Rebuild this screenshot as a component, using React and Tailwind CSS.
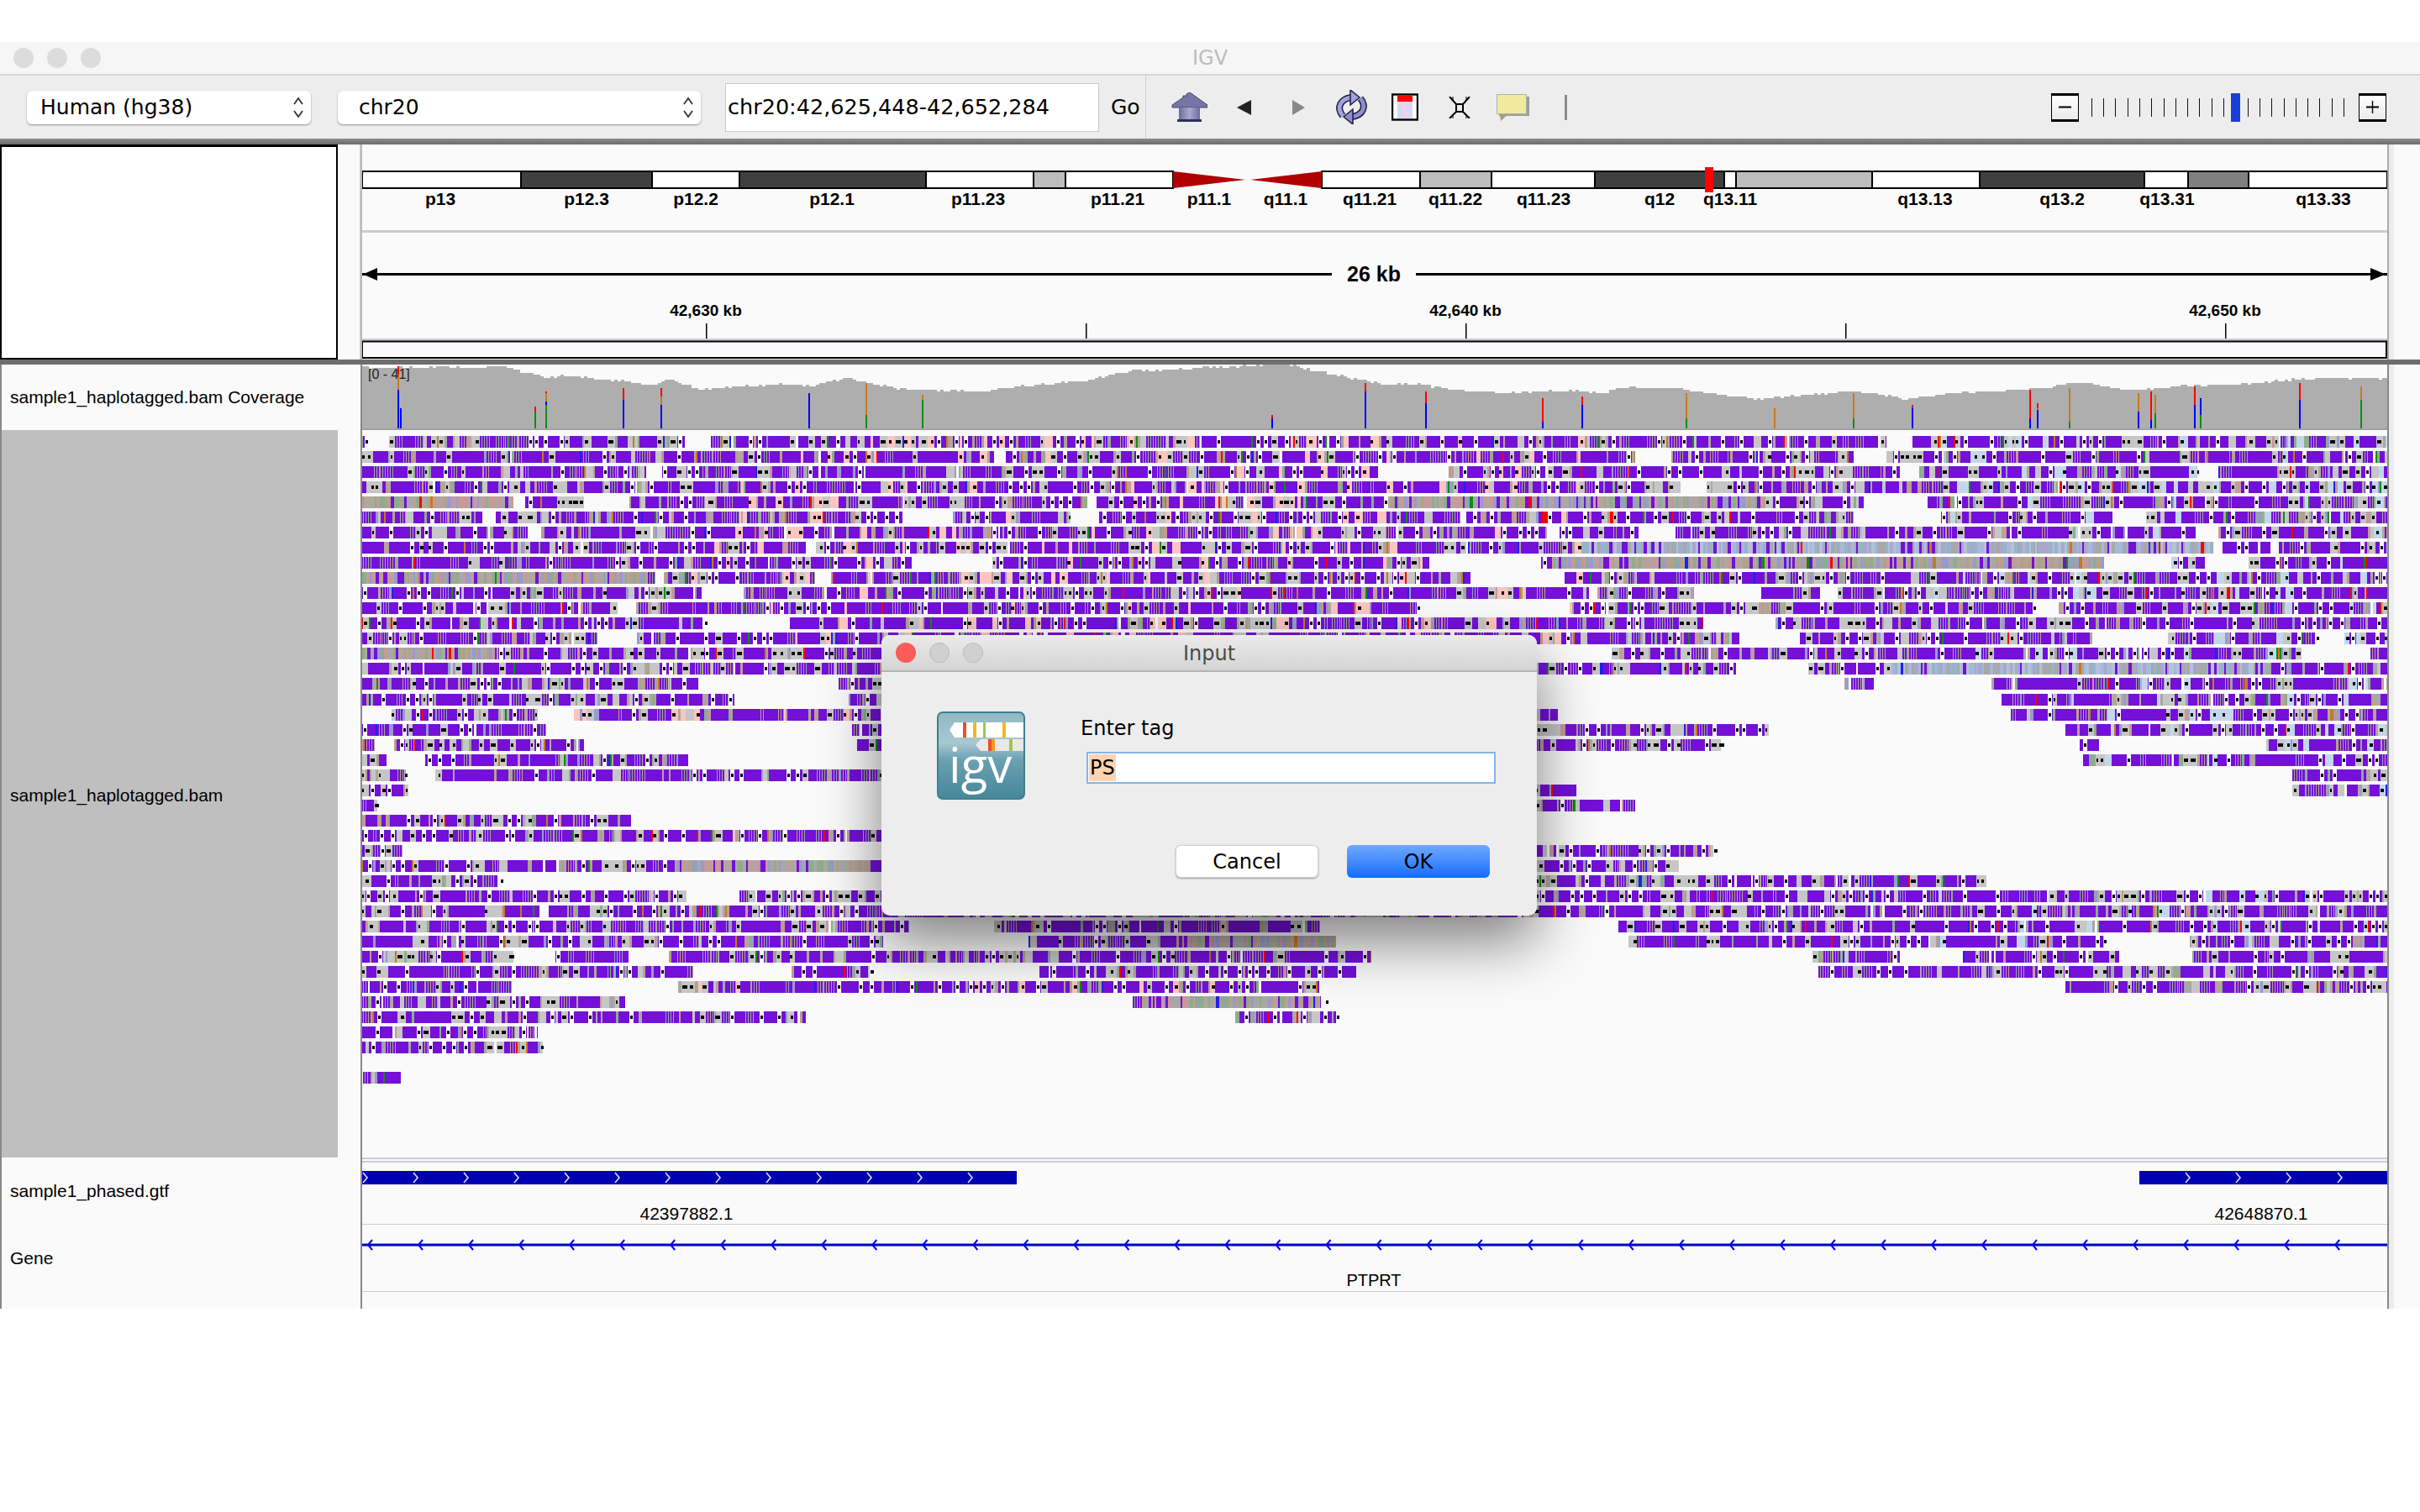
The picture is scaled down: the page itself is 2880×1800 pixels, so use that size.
import { useMemo } from "react";

const SANS = "font-['DejaVu_Sans',sans-serif]";
const ARIAL = "font-['Liberation_Sans',Arial,sans-serif]";

// spans are read off the two halves of the alignment view, 1.285 units per px
const lx = (z) => Math.round(430 + z / 1.285);
const rx = (z) => Math.round(1650 + z / 1.285);

const READ_ROWS = [
  [0, [[0, 8], [42, 495], [535, 1568]], [[0, 765], [805, 1530]]],
  [1, [[0, 968], [985, 1568]], [[0, 380], [435, 715], [765, 1530]]],
  [2, [[0, 435], [460, 1555]], [[95, 785], [815, 1240], [1272, 1530]]],
  [3, [[0, 1568]], [[0, 450], [490, 1530]]],
  [4, [[0, 232], [250, 340], [410, 1110], [1125, 1345], [1355, 1568]], [[0, 730], [828, 1530]]],
  [5, [[0, 185], [205, 828], [905, 1085], [1128, 1568]], [[0, 105], [122, 715], [848, 1110], [1162, 1530]]],
  [6, [[0, 255], [275, 1568]], [[0, 245], [265, 385], [442, 1238], [1272, 1530]]],
  [7, [[0, 680], [695, 1568]], [[0, 1265], [1278, 1352], [1365, 1530]]],
  [8, [[0, 842], [965, 1568]], [[0, 65], [236, 1098], [1200, 1252], [1318, 1530]]],
  [9, [[0, 440], [463, 692], [718, 1568]], [[0, 128], [273, 1530]]],
  [10, [[0, 520], [585, 1568]], [[0, 310], [323, 470], [573, 663], [690, 1530]]],
  [11, [[0, 392], [420, 1568]], [[0, 52], [280, 995], [1028, 1530]]],
  [12, [[0, 522], [655, 1568]], [[0, 485], [595, 1530]]],
  [13, [[0, 360], [422, 1568]], [[0, 540], [632, 1080], [1195, 1420], [1465, 1530]]],
  [14, [[0, 1568]], [[345, 1400], [1505, 1530]]],
  [15, [[0, 1568]], [[0, 535], [645, 1530]]],
  [16, [[0, 515], [730, 1568]], [[700, 745], [925, 1530]]],
  [17, [[0, 570], [745, 1568]], [[940, 1530]]],
  [18, [[42, 270], [325, 1568]], [[0, 262], [955, 1530]]],
  [19, [[0, 272], [750, 1568]], [[0, 585], [1038, 1530]]],
  [20, [[0, 14], [50, 340], [758, 1568]], [[0, 512], [1060, 1090], [1345, 1530]]],
  [21, [[0, 38], [98, 500]], [[1065, 1530]]],
  [22, [[0, 68], [113, 1568]], [[1385, 1530]]],
  [23, [[0, 72]], [[0, 290], [1385, 1530]]],
  [24, [[0, 25]], [[0, 380]]],
  [25, [[0, 412]], []],
  [26, [[0, 1568]], []],
  [27, [[0, 57]], [[0, 500]]],
  [28, [[0, 1568]], [[0, 447]]],
  [29, [[0, 208]], [[0, 917]]],
  [30, [[0, 500], [578, 1568]], [[0, 1530]]],
  [31, [[0, 272], [287, 1568]], [[0, 1530]]],
  [32, [[0, 838], [968, 1458]], [[355, 1530]]],
  [33, [[0, 798], [1020, 1490]], [[370, 1098], [1228, 1530]]],
  [34, [[0, 232], [297, 408], [470, 1545]], [[652, 785], [882, 1120], [1232, 1530]]],
  [35, [[0, 498], [658, 778], [1037, 1522]], [[660, 1530]]],
  [36, [[0, 226], [485, 1465]], [[1038, 1530]]],
  [37, [[0, 403], [1180, 1468]], []],
  [38, [[0, 680], [1337, 1492]], []],
  [39, [[0, 270]], []],
  [40, [[0, 278]], []],
  [42, [[0, 60]], []],
];

const TAN = ["#b4a08c", "#a8a8a8", "#b0a89c", "#8cae8c", "#c89a9a", "#9a9ad0"];
const COOL = ["#a8b8d8", "#b4c0dc", "#a8a8c8", "#98b4c8", "#a8a8a8"];

// stretches where the reads are low quality stripes instead of solid purple
const MUTED = [
  [4, 430, 610, TAN],
  [9, 430, 770, TAN],
  [14, 430, 590, TAN],
  [4, 1650, 2100, TAN],
  [7, 1880, 2640, COOL],
  [8, 1835, 2505, TAN],
  [15, 2250, 2700, COOL],
  [33, 1400, 1640, TAN],
  [37, 1350, 1570, TAN],
  [28, 800, 1040, TAN],
];

const PINK_ROWS = [[18, 680, 1049], [19, 1020, 1049], [36, 830, 1620], [26, 800, 1049]];

const ORDER = ["#7410d8", "#c6c6c6", "#fbc5c0", "#c2d8ea", "#b4a08c", "#a8a8a8", "#b0a89c", "#8cae8c", "#9a9ad0", "#c89a9a", "#a8b8d8", "#b4c0dc", "#a8a8c8", "#98b4c8", "#ff0000", "#108c10", "#2020f0", "#c87a1e", "#fafafa", "#000000"];
const VIVID = ["#ff0000", "#108c10", "#2020f0", "#c87a1e"];

function makeRandom(seed) {
  let a = seed;
  return () => {
    a = (a + 0x6d2b79f5) | 0;
    let t = Math.imul(a ^ (a >>> 15), 1 | a);
    t = (t + Math.imul(t ^ (t >>> 7), 61 | t)) ^ t;
    return ((t ^ (t >>> 14)) >>> 0) / 4294967296;
  };
}

function buildReads() {
  const rnd = makeRandom(20);
  const between = (a, b) => a + Math.floor(rnd() * (b - a + 1));
  const pick = (list) => list[Math.floor(rnd() * list.length)];
  const paths = {};
  ORDER.forEach((c) => (paths[c] = []));
  const add = (c, x, y, w, h) => paths[c].push(`M${x} ${y}h${w}v${h}h${-w}z`);

  READ_ROWS.forEach(([n, left, right]) => {
    const y = Math.round(7 + 18.03 * n);
    const spans = [
      ...left.map(([a, b]) => [lx(a), lx(b)]),
      ...right.map(([a, b]) => [rx(a), rx(b)]),
    ];
    spans.forEach(([a, b]) => {
      let x = a;
      while (x < b) {
        const muted = MUTED.find(([r, s, e]) => r === n && x >= s && x < e);
        const pinkZone = (x > 820 && x < 1880 && n < 14) || PINK_ROWS.some(([r, s, e]) => r === n && x >= s && x < e);
        const blueZone = x > 2300 && n < 34;
        const r = rnd();
        let w;
        if (muted) {
          w = between(2, 4);
          add(r < 0.14 ? "#7410d8" : r < 0.985 ? pick(muted[3]) : pick(VIVID), x, y, Math.min(w, b - x), 14);
        } else if (r < 0.42) {
          w = between(3, 14);
          add("#7410d8", x, y, Math.min(w, b - x), 14);
          if (rnd() < 0.4 && w > 7) {
            const dx = x + between(1, w - 6);
            add("#fafafa", dx, y, 5, 14);
            add("#000000", dx + 1, y + 5, 3, 4);
          }
        } else if (r < 0.54) {
          w = between(3, 10);
          const q = rnd();
          const light = pinkZone && q < 0.75 ? "#fbc5c0" : blueZone && q < 0.6 ? "#c2d8ea" : "#c6c6c6";
          add(light, x, y, Math.min(w, b - x), 14);
          if (rnd() < 0.6 && w > 4) add("#000000", x + between(0, w - 4), y + 5, between(3, 4), 4);
        } else if (r < 0.76) {
          w = between(2, 3);
          add(pick(TAN), x, y, Math.min(w, b - x), 14);
        } else if (r < 0.81) {
          w = 2;
          add(pick(VIVID), x, y, Math.min(w, b - x), 14);
        } else if (r < 0.825) {
          w = between(2, 3);
          add("#fafafa", x, y, Math.min(w, b - x), 14);
        } else if (r < 0.9) {
          w = between(5, 9);
          add("#c6c6c6", x, y, Math.min(w, b - x), 14);
          add("#000000", x + 1, y + 5, Math.max(w - 3, 2), 4);
        } else {
          // thin purple comb on a muted ground, the fine lines seen all over the pile
          w = between(6, 12);
          for (let i = 0; i < w; i += 3) {
            add("#7410d8", x + i, y, 2, 14);
            add(pick(TAN), x + i + 2, y, 1, 14);
          }
        }
        x += w;
      }
    });
  });
  return ORDER.map((c) => ({ color: c, d: paths[c].join("") }));
}

// silhouette of the coverage track, [x, y of the top edge]
const COVERAGE = [
  [431, 438], [600, 437], [630, 445], [648, 450], [676, 447], [735, 453], [776, 458], [793, 451], [830, 463], [925, 457], [965, 460], [1005, 450], [1070, 463], [1160, 466], [1210, 460], [1290, 453], [1340, 442], [1450, 437], [1530, 434], [1590, 447], [1640, 457], [1690, 458], [1722, 463], [1788, 468], [1861, 465], [1902, 468], [1935, 461], [2000, 463], [2090, 475], [2155, 470], [2204, 465], [2269, 475], [2335, 467], [2416, 463], [2482, 455], [2531, 465], [2612, 458], [2661, 458], [2735, 451], [2841, 450],
];

// x, then colour from y down to the next colour
const COVERAGE_BARS = [
  [473, ["#ff0000", 436], ["#c87a1e", 446], ["#0000ff", 464]],
  [476, ["#0000ff", 486]],
  [636, ["#ff0000", 484], ["#108c10", 490]],
  [649, ["#ff0000", 466], ["#c87a1e", 468], ["#0000ff", 478], ["#108c10", 482]],
  [741, ["#ff0000", 462], ["#0000ff", 476]],
  [786, ["#ff0000", 462], ["#c87a1e", 472], ["#0000ff", 482]],
  [962, ["#0000ff", 468]],
  [1030, ["#c87a1e", 456], ["#108c10", 494]],
  [1097, ["#c87a1e", 470], ["#108c10", 476]],
  [1513, ["#ff0000", 494], ["#0000ff", 498]],
  [1624, ["#ff0000", 456], ["#0000ff", 466]],
  [1696, ["#ff0000", 466], ["#0000ff", 480]],
  [1835, ["#ff0000", 474], ["#0000ff", 502]],
  [1882, ["#ff0000", 472], ["#0000ff", 482]],
  [2006, ["#c87a1e", 468], ["#108c10", 498]],
  [2111, ["#c87a1e", 486]],
  [2205, ["#c87a1e", 468], ["#108c10", 498]],
  [2275, ["#ff0000", 482], ["#0000ff", 486]],
  [2415, ["#ff0000", 464], ["#0000ff", 498]],
  [2424, ["#ff0000", 480], ["#c87a1e", 486], ["#0000ff", 488]],
  [2462, ["#c87a1e", 462], ["#108c10", 502]],
  [2544, ["#c87a1e", 468], ["#0000ff", 490]],
  [2559, ["#ff0000", 466], ["#0000ff", 500]],
  [2564, ["#c87a1e", 470], ["#108c10", 492]],
  [2611, ["#ff0000", 460], ["#0000ff", 482]],
  [2618, ["#0000ff", 474], ["#108c10", 494]],
  [2736, ["#ff0000", 456], ["#0000ff", 476]],
  [2809, ["#c87a1e", 460], ["#108c10", 476]],
];

function buildCoverage() {
  const rnd = makeRandom(7);
  let d = "M431 510";
  for (let x = 431; x <= 2841; x += 4) {
    const i = COVERAGE.findIndex((p) => p[0] > x);
    const [x0, y0] = COVERAGE[Math.max(i - 1, 0)];
    const [x1, y1] = i < 0 ? COVERAGE[COVERAGE.length - 1] : COVERAGE[i];
    const top = y0 + (x1 > x0 ? ((y1 - y0) * (x - x0)) / (x1 - x0) : 0);
    const stepped = Math.round((top + rnd() * 2.4 - 1.2) / 2) * 2;
    d += `L${x} ${stepped}h4`;
  }
  return d + "V510z";
}

const BANDS = [
  [431, 620, "#ffffff"], [620, 776, "#404040"], [776, 880, "#ffffff"], [880, 1102, "#404040"], [1102, 1230, "#ffffff"], [1230, 1268, "#bdbdbd"], [1268, 1396, "#ffffff"],
  [1573, 1690, "#ffffff"], [1690, 1775, "#bdbdbd"], [1775, 1898, "#ffffff"], [1898, 2052, "#404040"], [2052, 2066, "#ffffff"], [2066, 2228, "#bdbdbd"], [2228, 2356, "#ffffff"], [2356, 2552, "#404040"], [2552, 2604, "#ffffff"], [2604, 2676, "#808080"], [2676, 2841, "#ffffff"],
];

const BAND_LABELS = [
  ["p13", 524], ["p12.3", 698], ["p12.2", 828], ["p12.1", 990], ["p11.23", 1164], ["p11.21", 1330], ["p11.1", 1439], ["q11.1", 1530], ["q11.21", 1630], ["q11.22", 1732], ["q11.23", 1837], ["q12", 1975], ["q13.11", 2059], ["q13.13", 2291], ["q13.2", 2454], ["q13.31", 2579], ["q13.33", 2765],
];

function ChromosomePanel() {
  return (
    <svg width="2410" height="256" className="block">
      <g transform="translate(-431 -172)">
        {BANDS.map(([a, b, c]) => (
          <rect key={a} x={a} y="204" width={b - a} height="20" fill={c} stroke="#000" strokeWidth="2" />
        ))}
        <polygon points="1396,204 1482,214 1396,224" fill="#b00000" />
        <polygon points="1573,204 1488,214 1573,224" fill="#b00000" />
        <rect x="2029" y="199" width="10" height="30" fill="#ff0000" />
        {BAND_LABELS.map(([t, x]) => (
          <text key={t} x={x} y="244" textAnchor="middle" fontFamily="Liberation Sans" fontWeight="700" fontSize="21">
            {t}
          </text>
        ))}
        <rect x="431" y="274" width="2410" height="3" fill="#cbcbd6" />
        <rect x="431" y="403" width="2410" height="3" fill="#cbcbd6" />
        <rect x="431" y="325" width="1154" height="3" fill="#000" />
        <rect x="1685" y="325" width="1156" height="3" fill="#000" />
        <polygon points="432,326.5 449,319 449,334" fill="#000" />
        <polygon points="2839,326.5 2821,319 2821,334" fill="#000" />
        <text x="1635" y="335" textAnchor="middle" fontFamily="Liberation Sans" fontWeight="700" fontSize="25">
          26 kb
        </text>
        {[840, 1292, 1744, 2196, 2648].map((x) => (
          <rect key={x} x={x} y="385" width="1.5" height="18" fill="#000" />
        ))}
        {[["42,630 kb", 840], ["42,640 kb", 1744], ["42,650 kb", 2648]].map(([t, x]) => (
          <text key={t} x={x} y="376" textAnchor="middle" fontFamily="Liberation Sans" fontWeight="700" fontSize="19">
            {t}
          </text>
        ))}
        <rect x="431" y="406.5" width="2409" height="19.5" fill="none" stroke="#000" strokeWidth="2" />
      </g>
    </svg>
  );
}

function CoverageTrack() {
  const d = useMemo(buildCoverage, []);
  return (
    <svg width="2410" height="78" className="block">
      <g transform="translate(-431 -434)">
        <path d={d} fill="#aeaeae" />
        {COVERAGE_BARS.map(([x, ...parts]) =>
          parts.map(([c, y], i) => {
            const next = parts[i + 1] ? parts[i + 1][1] : 510;
            return <rect key={`${x}-${i}`} x={x} y={y} width="2" height={next - y} fill={c} />;
          })
        )}
        <text x="438" y="451" fontFamily="Liberation Sans" fontSize="16" fill="#222">
          [0 - 41]
        </text>
        <rect x="431" y="510" width="2410" height="2" fill="#a0a0a0" />
      </g>
    </svg>
  );
}

function ReadsTrack() {
  const layers = useMemo(buildReads, []);
  return (
    <svg width="2410" height="866" className="block" shapeRendering="crispEdges">
      <g transform="translate(-431 0)">
        {layers.map((l) => (
          <path key={l.color} d={l.d} fill={l.color} />
        ))}
      </g>
    </svg>
  );
}

function chevronsRight(list, y) {
  return list.map((x) => (
    <path key={x} d={`M${x - 3} ${y - 6}l5 6l-5 6`} fill="none" stroke="#dcdcff" strokeWidth="1.6" />
  ));
}

function FeatureTrack() {
  const left = Array.from({ length: 13 }, (_, i) => 435 + 60 * i);
  return (
    <svg width="2410" height="80" className="block">
      <g transform="translate(-431 -1378)">
        <rect x="431" y="1378" width="2410" height="2" fill="#cbcbd6" />
        <rect x="431" y="1382" width="2410" height="2" fill="#cbcbd6" />
        <rect x="431" y="1394" width="779" height="16" fill="#0000b0" />
        <rect x="2546" y="1394" width="295" height="16" fill="#0000b0" />
        {chevronsRight(left, 1402)}
        {chevronsRight([2604, 2664, 2724, 2785], 1402)}
        <text x="817" y="1452" textAnchor="middle" fontFamily="Liberation Sans" fontSize="21">
          42397882.1
        </text>
        <text x="2691" y="1452" textAnchor="middle" fontFamily="Liberation Sans" fontSize="21">
          42648870.1
        </text>
        <rect x="431" y="1457" width="2410" height="2" fill="#cbcbd6" />
      </g>
    </svg>
  );
}

function GeneTrack() {
  const marks = Array.from({ length: 40 }, (_, i) => 440 + 60.03 * i);
  return (
    <svg width="2410" height="80" className="block">
      <g transform="translate(-431 -1458)">
        <rect x="431" y="1480.5" width="2410" height="3" fill="#0000c8" />
        {marks.map((x) => (
          <path key={x} d={`M${x + 3} ${1476}l-5 6l5 6`} fill="none" stroke="#0000ff" strokeWidth="2" />
        ))}
        <text x="1635" y="1531" textAnchor="middle" fontFamily="Liberation Sans" fontSize="20">
          PTPRT
        </text>
        <rect x="431" y="1537" width="2410" height="2" fill="#cbcbd6" />
      </g>
    </svg>
  );
}

function UpDown() {
  return (
    <svg width="12" height="26" viewBox="0 0 12 26" fill="none" stroke="#333" strokeWidth="1.8">
      <path d="M1 9l5-7l5 7" />
      <path d="M1 17l5 7l5-7" />
    </svg>
  );
}

function Combo({ widthClass, textPad, label }) {
  return (
    <div className={`${widthClass} ${textPad} h-[40px] bg-white rounded-md shadow-[0_1px_2px_rgba(0,0,0,0.4)] flex items-center justify-between pr-[9px] text-[25px] text-black`}>
      <span>{label}</span>
      <UpDown />
    </div>
  );
}

function HomeIcon() {
  return (
    <svg width="43" height="35" viewBox="0 0 43 35" className="ml-[30px]">
      <defs>
        <linearGradient id="homeBody" x1="0" x2="1" y1="0" y2="0">
          <stop offset="0" stopColor="#6c6c9c" />
          <stop offset="0.5" stopColor="#a8a8cc" />
          <stop offset="1" stopColor="#6c6c9c" />
        </linearGradient>
      </defs>
      <path d="M14 4h4v-2l4-2l21 15v3H1v-3l13-9z" fill="#7676a6" stroke="#45456f" strokeWidth="1" />
      <rect x="9" y="18" width="25" height="15" fill="url(#homeBody)" />
      <rect x="7" y="32" width="29" height="3" fill="#2f2f5e" />
    </svg>
  );
}

function RefreshIcon() {
  return (
    <svg width="43" height="41" viewBox="0 0 43 41" className="ml-[34px]" fill="none" strokeLinecap="butt">
      <path d="M11 31C3 21 8 11 21 9" stroke="#1e1e48" strokeWidth="8" />
      <path d="M11 31C3 21 8 11 21 9" stroke="#a2a2dc" strokeWidth="5" />
      <path d="M20 0l11 9l-11 9z" fill="#a2a2dc" stroke="#1e1e48" strokeWidth="1.5" />
      <path d="M32 10C40 20 35 30 22 32" stroke="#1e1e48" strokeWidth="8" />
      <path d="M32 10C40 20 35 30 22 32" stroke="#8e8ecc" strokeWidth="5" />
      <path d="M23 41l-11-9l11-9z" fill="#8e8ecc" stroke="#1e1e48" strokeWidth="1.5" />
    </svg>
  );
}

function RegionIcon() {
  return (
    <svg width="32" height="33" viewBox="0 0 32 33" className="ml-[26px]">
      <rect x="1" y="1.5" width="30" height="30" fill="#fff" stroke="#000" strokeWidth="2.4" />
      <rect x="7" y="3" width="18" height="27" fill="#d8d8f4" />
      <rect x="7" y="3" width="18" height="7" fill="#ff0000" />
      <rect x="12" y="14" width="6" height="5" fill="#f0d4e2" />
      <rect x="15" y="22" width="6" height="4" fill="#f0d4e2" />
    </svg>
  );
}

function ExpandIcon() {
  return (
    <svg width="28" height="26" viewBox="0 0 28 26" className="ml-[35px]" fill="none" stroke="#000" strokeWidth="2">
      <rect x="10" y="9" width="8" height="9" />
      <path d="M2 0l8 9M26 0l-8 9M2 26l8-8M26 26l-8-8" />
      <path d="M6 0v4M22 0v4M6 26v-4M22 26v-4" strokeWidth="1" />
    </svg>
  );
}

function CommentIcon() {
  return (
    <svg width="39" height="32" viewBox="0 0 39 32" className="ml-[30px]">
      <rect x="3" y="3" width="36" height="23" fill="#9c9c9c" />
      <path d="M4 24l1 8l9-8z" fill="#a0a088" />
      <rect x="0.5" y="0.5" width="35" height="23" fill="#efea9e" stroke="#b0b0b0" />
    </svg>
  );
}

function ZoomButton({ glyph }) {
  return (
    <div className="w-[33px] h-[34px] bg-gradient-to-b from-white to-[#eaeaea] border-x border-black border-t-[3px] border-b-[3px] flex items-center justify-center">
      <svg width="17" height="17" viewBox="0 0 17 17" stroke="#000" strokeWidth="2">
        <path d="M1 8.5h15" />
        {glyph === "plus" && <path d="M8.5 1v15" strokeWidth="1.4" />}
      </svg>
    </div>
  );
}

function ZoomSlider() {
  const ticks = Array.from({ length: 22 });
  return (
    <div className="ml-auto mr-[40px] flex items-center">
      <ZoomButton glyph="minus" />
      <div className="relative ml-[15px] mr-[17px] flex items-center h-[34px] gap-[13.3px]">
        {ticks.map((_, i) => (
          <div key={i} className="w-px h-[22px] bg-[#111]" />
        ))}
        <div className="absolute left-[166px] top-0 w-[11px] h-[34px] bg-[#1a3fd8]" />
      </div>
      <ZoomButton glyph="plus" />
    </div>
  );
}

function IgvLogo() {
  return (
    <svg width="105" height="105" viewBox="0 0 105 105" className="shrink-0">
      <defs>
        <linearGradient id="logoBg" x1="0" x2="0" y1="0" y2="1">
          <stop offset="0" stopColor="#8fb8c4" />
          <stop offset="0.35" stopColor="#a8c8d2" />
          <stop offset="0.55" stopColor="#6ba0b0" />
          <stop offset="1" stopColor="#44889a" />
        </linearGradient>
      </defs>
      <rect x="1" y="1" width="103" height="103" rx="6" fill="url(#logoBg)" stroke="#3f7f90" strokeWidth="2" />
      <path d="M15 22l6-9h82v18H21z" fill="#fff" />
      <rect x="31" y="13" width="4" height="18" fill="#e8502a" />
      <rect x="43" y="13" width="4" height="18" fill="#f4b81e" />
      <rect x="55" y="13" width="3" height="18" fill="#9cc84a" />
      <rect x="78" y="13" width="4" height="18" fill="#f4b81e" />
      <path d="M46 40l6-7h51v14H52z" fill="#e8e8e8" />
      <rect x="61" y="33" width="4" height="14" fill="#e8502a" />
      <rect x="65" y="33" width="4" height="14" fill="#f49a1e" />
      <rect x="86" y="33" width="4" height="14" fill="#9cc84a" />
      <text x="14" y="85" fill="#fff" fontFamily="Open Sans" fontSize="58">
        igv
      </text>
    </svg>
  );
}

function InputDialog() {
  return (
    <div className={`${SANS} absolute left-[1049px] top-[756px] w-[780px] h-[334px] rounded-[10px] bg-[#ededed] shadow-[0_30px_70px_rgba(0,0,0,0.5)]`}>
      <div className="h-[44px] rounded-t-[10px] bg-gradient-to-b from-[#ebebeb] to-[#d4d4d4] border-b-2 border-[#b4b4b4] relative flex items-center pl-[17px] gap-[16px]">
        <div className="w-[24px] h-[24px] rounded-full bg-[#fc5b57]" />
        <div className="w-[24px] h-[24px] rounded-full bg-[#d0d0d0] border border-[#bcbcbc]" />
        <div className="w-[24px] h-[24px] rounded-full bg-[#d0d0d0] border border-[#bcbcbc]" />
        <div className="absolute inset-0 pt-[2px] flex items-center justify-center text-[24px] text-[#4a4a4a]">Input</div>
      </div>
      <div className="flex h-[206px] pt-[47px] pl-[66px]">
        <IgvLogo />
        <div className="ml-[66px] pt-[5px] text-black text-[24px]">
          <div className="h-[30px] leading-[30px]">Enter tag</div>
          <div className="ml-[7px] mt-[13px] w-[487px] h-[38px] bg-white border-2 border-[#85b4ea] flex items-center pl-[1px]">
            <span className="bg-[#fdd3b0] h-[32px] leading-[32px] px-[1px]">PS</span>
          </div>
        </div>
      </div>
      <div className="flex justify-end gap-[34px] pr-[56px] text-[24px] text-black">
        <div className="w-[170px] h-[39px] rounded-md bg-white border border-[#cfcfcf] shadow-[0_1px_2px_rgba(0,0,0,0.35)] flex items-center justify-center">Cancel</div>
        <div className="w-[170px] h-[39px] rounded-md bg-gradient-to-b from-[#6ea8fc] to-[#0a6bff] flex items-center justify-center">OK</div>
      </div>
    </div>
  );
}

function Track({ heightClass, label, labelPad, gray, children }) {
  return (
    <div className={`flex ${heightClass} bg-[#fafafa]`}>
      <div className={`${ARIAL} w-[431px] shrink-0 border-x-2 border-[#888] text-[21px] text-black`}>
        <div className={`w-[400px] h-full flex items-center pl-[10px] ${labelPad || ""} ${gray ? "bg-[#bfbfbf]" : ""}`}>{label}</div>
      </div>
      <div className="w-[2410px] shrink-0">{children}</div>
      <div className="w-[2px] shrink-0 bg-[#888]" />
      <div className="w-[6px] shrink-0 bg-[#ececec]" />
    </div>
  );
}

export default function App() {
  return (
    <div className="relative w-[2880px] h-[1800px] bg-white overflow-hidden">
      <div className="h-[50px]" />

      <div className="h-[40px] bg-[#f6f6f6] border-b-2 border-[#d4d4d4] grid grid-cols-[1fr_auto_1fr] items-center px-[16px]">
        <div className="flex gap-[16px]">
          <div className="w-[24px] h-[24px] rounded-full bg-[#dcdcdc]" />
          <div className="w-[24px] h-[24px] rounded-full bg-[#dcdcdc]" />
          <div className="w-[24px] h-[24px] rounded-full bg-[#dcdcdc]" />
        </div>
        <div className={`${SANS} text-[24px] text-[#bcbcbc]`}>IGV</div>
        <div />
      </div>

      <div className={`${SANS} h-[75px] bg-[#ededed] flex items-center`}>
        <div className="ml-[32px]">
          <Combo widthClass="w-[338px]" textPad="pl-[16px]" label="Human (hg38)" />
        </div>
        <div className="ml-[32px]">
          <Combo widthClass="w-[432px]" textPad="pl-[25px]" label="chr20" />
        </div>
        <div className="ml-[29px] w-[445px] h-[58px] bg-white border border-[#c8c8c8] flex items-center pl-[2px] text-[25.5px] text-black whitespace-nowrap">chr20:42,625,448-42,652,284</div>
        <div className="ml-[14px] text-[25px] text-black w-[41px]">Go</div>
        <div className="w-px h-full bg-[#d0d0d0]" />
        <HomeIcon />
        <svg width="17" height="18" viewBox="0 0 17 18" className="ml-[35px]">
          <path d="M17 0v18L0 9z" fill="#222" />
        </svg>
        <svg width="15" height="18" viewBox="0 0 15 18" className="ml-[49px]">
          <path d="M0 0v18l15-9z" fill="#888" />
        </svg>
        <RefreshIcon />
        <RegionIcon />
        <ExpandIcon />
        <CommentIcon />
        <div className="ml-[42px] w-[3px] h-[30px] bg-[#8c8c8c]" />
        <ZoomSlider />
      </div>

      <div className="h-[7px] bg-gradient-to-b from-[#8c8c8c] to-[#6c6c6c]" />

      <div className="flex h-[256px] bg-[#fafafa]">
        <div className="w-[402px] h-full shrink-0 bg-white border-2 border-t-[3px] border-black" />
        <div className="w-[27px] shrink-0 border-r border-[#cccccc]" />
        <div className="w-[2px] shrink-0 bg-[#bbbbbb]" />
        <div className="w-[2410px] shrink-0">
          <ChromosomePanel />
        </div>
        <div className="w-[2px] shrink-0 bg-[#aaaaaa]" />
        <div className="w-[6px] shrink-0 bg-[#ececec]" />
      </div>

      <div className="h-[6px] bg-[#6e6e6e]" />

      <Track heightClass="h-[78px]" label="sample1_haplotagged.bam Coverage">
        <CoverageTrack />
      </Track>
      <Track heightClass="h-[866px]" labelPad="pt-[4px]" label="sample1_haplotagged.bam" gray>
        <ReadsTrack />
      </Track>
      <Track heightClass="h-[80px]" label="sample1_phased.gtf">
        <FeatureTrack />
      </Track>
      <Track heightClass="h-[80px]" label="Gene">
        <GeneTrack />
      </Track>
      <Track heightClass="h-[20px]" label="" />

      <InputDialog />
    </div>
  );
}
